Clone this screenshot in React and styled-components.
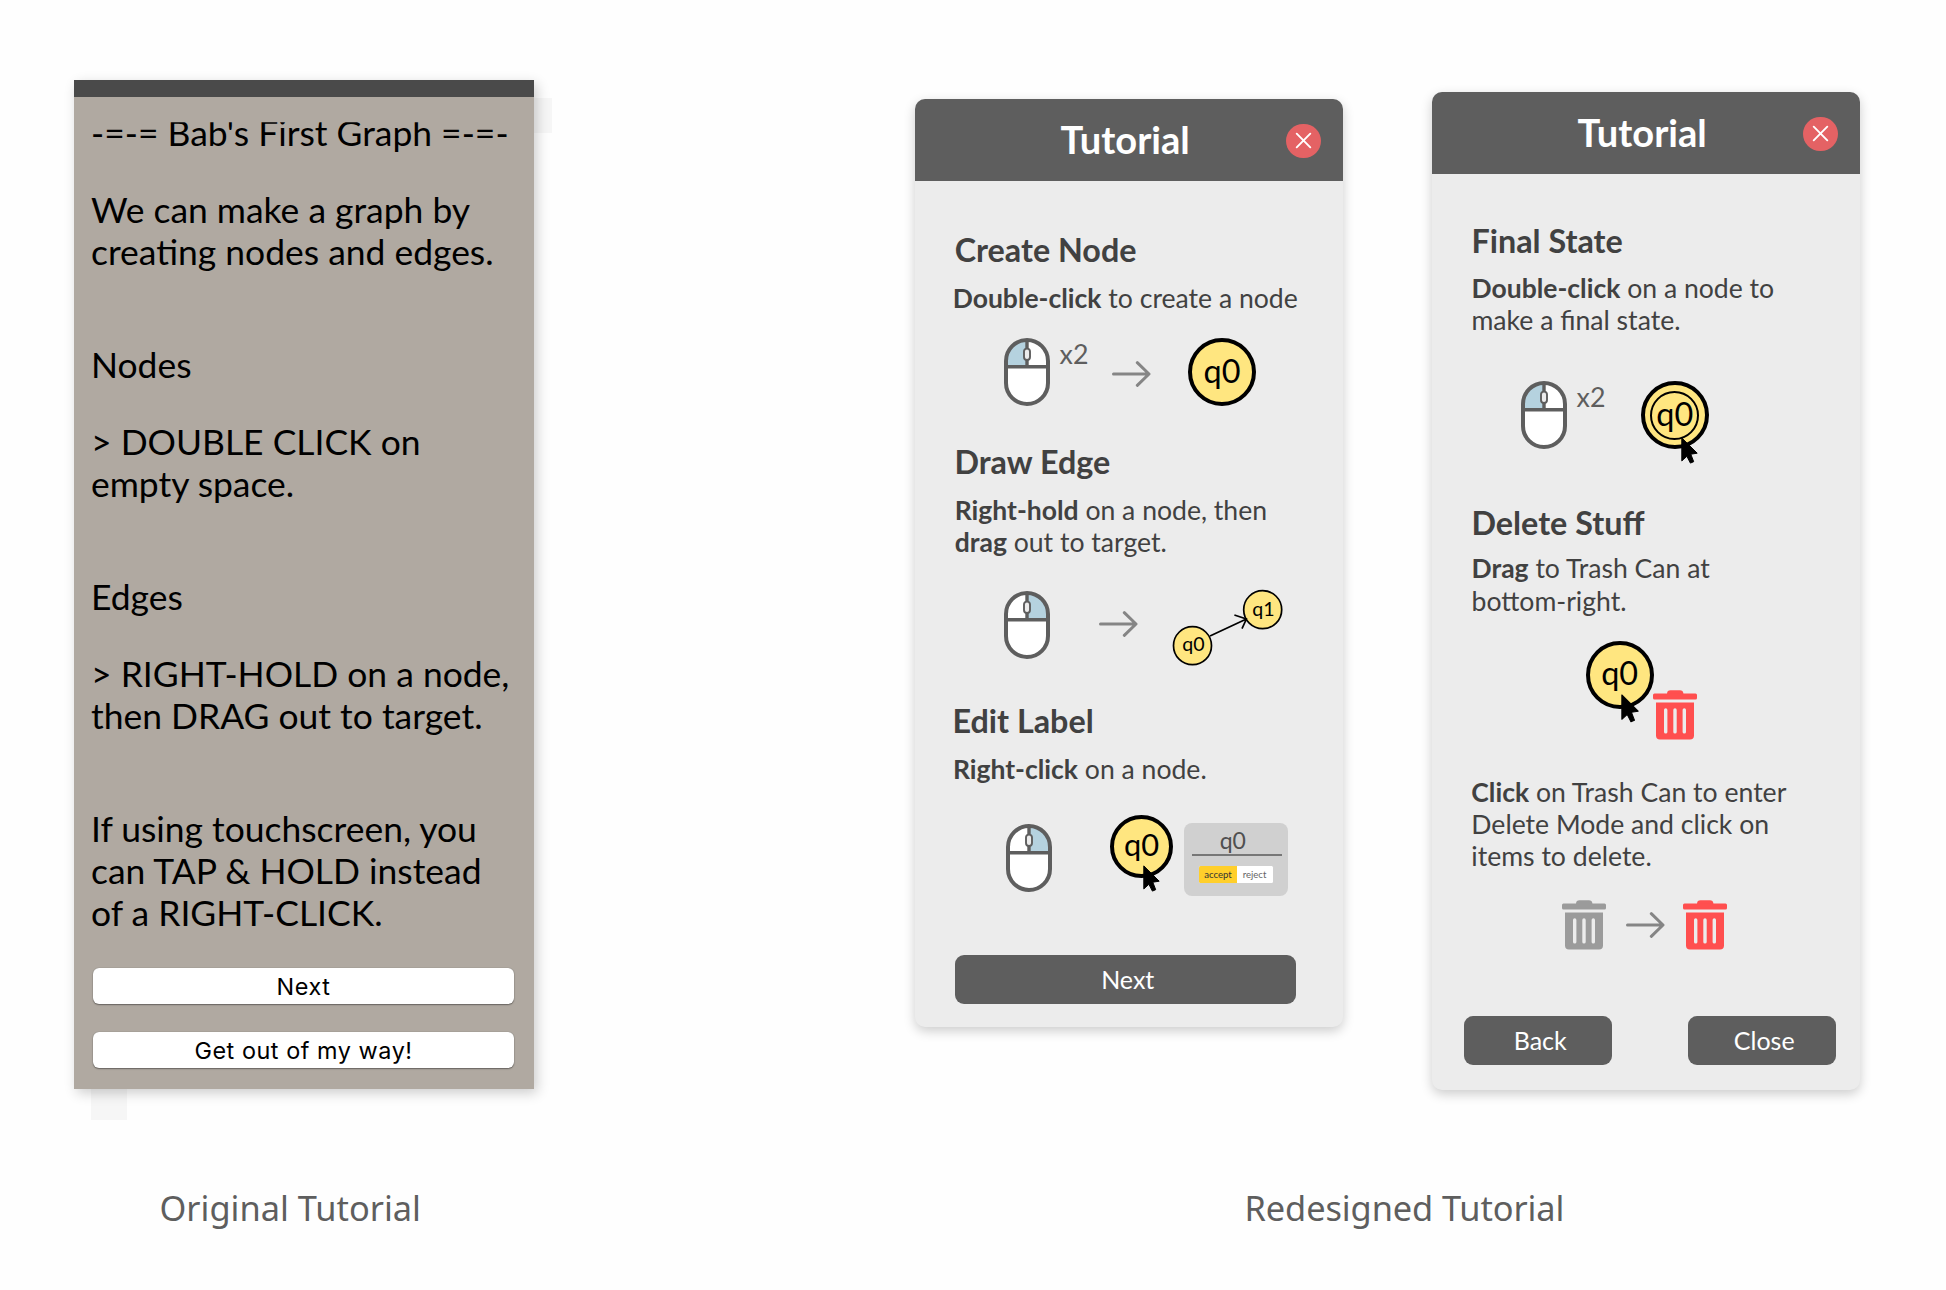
import React from "react";
import styled, { createGlobalStyle } from "styled-components";

const GlobalStyle = createGlobalStyle`
  *, *::before, *::after { box-sizing: border-box; }
  body { margin: 0; background: #fefefe; font-family: Lato, "Open Sans", sans-serif; }
  p, h1, h2, h3 { margin: 0; font-weight: 400; }
  button { border: 0; padding: 0; margin: 0; font-family: inherit; cursor: pointer; }
  svg { display: block; flex: none; }
`;

const Page = styled.main`
  width: 1946px;
  height: 1290px;
  display: flex;
  flex-direction: column;
  overflow: hidden;
  background: #fefefe;
`;

const Stage = styled.div`
  height: 1184px;
  display: flex;
  align-items: flex-start;
  padding-left: 74px;
`;

const Captions = styled.div`
  display: flex;
  padding-left: 159.5px;
`;

const Caption = styled.p`
  width: ${(p) => p.$width || "auto"};
  font: 400 34.4px/48px "Noto Sans", sans-serif;
  letter-spacing: ${(p) => p.$spacing || "0"};
  color: #5e5e5e;
  white-space: nowrap;
`;

/* ---------- original panel ---------- */

const OldPanel = styled.section`
  position: relative;
  width: 460px;
  height: 1009px;
  margin-top: 80px;
  display: flex;
  flex-direction: column;
  background: #b0a9a1;
  box-shadow: 3px 4px 12px rgba(0, 0, 0, 0.2);
`;

const OldBar = styled.div`
  flex: none;
  height: 17px;
  background: #4a4a4a;
`;

const GhostSide = styled.div`
  position: absolute;
  left: 460px;
  top: 18px;
  width: 18px;
  height: 35px;
  background: rgba(0, 0, 0, 0.03);
`;

const GhostBottom = styled.div`
  position: absolute;
  left: 17px;
  top: 1009px;
  width: 36px;
  height: 31px;
  background: rgba(0, 0, 0, 0.03);
`;

const OldBody = styled.div`
  flex: 1;
  display: flex;
  flex-direction: column;
  padding: 15.2px 20px 20px 17px;
`;

const OldText = styled.p`
  font-size: 35.45px;
  line-height: 42px;
  color: #000;
  white-space: pre-line;
  margin-bottom: ${(p) => (p.$wide ? "70.5px" : "35.3px")};
  clip-path: ${(p) => (p.$clipped ? "inset(10px 0 0 0)" : "none")};
  &:last-of-type { margin-bottom: 0; }
`;

const OldActions = styled.div`
  margin: auto 0 1px 2px;
  display: flex;
  flex-direction: column;
  gap: 28px;
`;

const OldButton = styled.button`
  height: 36px;
  padding-top: 2px;
  border-radius: 6px;
  background: #fff;
  box-shadow: 0 0 1px rgba(0, 0, 0, 0.35), 0 1px 1.5px rgba(0, 0, 0, 0.4);
  font: 400 23.4px/34px Inter, sans-serif;
  letter-spacing: 0.55px;
  color: #000;
`;

/* ---------- redesigned panels ---------- */

const Panel = styled.section`
  width: 428px;
  height: ${(p) => p.$height};
  margin: ${(p) => p.$margin};
  display: flex;
  flex-direction: column;
  border-radius: 10px;
  background: #ececec;
  box-shadow: 0 4px 12px rgba(0, 0, 0, 0.2);
`;

const Header = styled.header`
  height: 81.5px;
  flex: none;
  display: flex;
  align-items: center;
  justify-content: space-between;
  padding: 2px 22.5px 0 145.5px;
  border-radius: 10px 10px 0 0;
  background: #5e5e5e;
`;

const Title = styled.h1`
  margin-bottom: 4px;
  font-size: 38.1px;
  line-height: 46px;
  font-weight: 700;
  color: #fff;
`;

const CloseButton = styled.button`
  width: 34.5px;
  height: 34.5px;
  border-radius: 50%;
  display: grid;
  place-items: center;
  background: #e46264;
`;

const Body = styled.div`
  flex: 1;
  display: flex;
  flex-direction: column;
  padding: ${(p) => p.$padding};
`;

const Section = styled.section`
  height: ${(p) => p.$height};
  flex: none;
  display: flex;
  flex-direction: column;
`;

const Heading = styled.h2`
  font-size: 32.3px;
  line-height: 38px;
  font-weight: 700;
  color: #414141;
  margin-left: ${(p) => p.$left || "0"};
`;

const Copy = styled.p`
  font-size: 26.6px;
  line-height: ${(p) => p.$leading || "32px"};
  color: #414141;
  white-space: pre;
  margin-top: ${(p) => p.$top ?? "13px"};
  margin-left: ${(p) => p.$left || "0"};
  b { font-size: 26.5px; font-weight: 700; }
`;

const Figure = styled.div`
  display: flex;
  align-items: flex-start;
  padding-left: ${(p) => p.$left};
  margin-top: ${(p) => p.$top};
`;

const Part = styled.div`
  flex: none;
  position: relative;
  margin: ${(p) => p.$margin || "0"};
`;

const Times = styled.span`
  flex: none;
  width: 30px;
  margin: 0 0 0 9.6px;
  font-size: 26.8px;
  line-height: 32px;
  color: #5e5e5e;
`;

const NodeCircle = styled.div`
  width: ${(p) => p.$size}px;
  height: ${(p) => p.$size}px;
  padding-bottom: 2.5px;
  display: grid;
  place-items: center;
  border: 4px solid #000;
  border-radius: 50%;
  background: #ffe680;
  font-size: ${(p) => (p.$size > 65 ? 32.4 : 30.8)}px;
  line-height: 38px;
  color: #000;
`;

const InnerRing = styled.span`
  position: absolute;
  inset: 9.4px;
  border: 2px solid #000;
  border-radius: 50%;
`;

const CursorSpot = styled.div`
  position: absolute;
  left: ${(p) => p.$x}px;
  top: ${(p) => p.$y}px;
`;

const LabelCard = styled.div`
  width: 104px;
  height: 73.5px;
  padding: 4.5px 6.5px 0 8px;
  display: flex;
  flex-direction: column;
  border-radius: 8px;
  background: #d0d0d0;
`;

const LabelValue = styled.div`
  height: 29px;
  border-bottom: 2px solid #777;
  padding-right: 8px;
  text-align: center;
  font-size: 23px;
  line-height: 26px;
  color: #505050;
`;

const Toggle = styled.div`
  width: 74px;
  height: 17.5px;
  margin: 9.5px 0 0 7px;
  display: flex;
  border-radius: 1.5px;
  overflow: hidden;
  background: #fff;
`;

const ToggleItem = styled.span`
  width: ${(p) => (p.$active ? "38px" : "35px")};
  background: ${(p) => (p.$active ? "#ffcf2b" : "#fff")};
  color: ${(p) => (p.$active ? "#333" : "#666")};
  font-size: 9.6px;
  line-height: 17px;
  text-align: center;
`;

const Actions = styled.div`
  display: flex;
  justify-content: space-between;
  margin-top: auto;
  padding-left: ${(p) => p.$left || "0"};
`;

const Button = styled.button`
  width: ${(p) => p.$width};
  height: 49.5px;
  padding-left: 4.5px;
  border-radius: 9px;
  background: #5e5e5e;
  font-size: 25px;
  line-height: 48px;
  color: #fff;
`;

/* ---------- drawings ---------- */

const Mouse = ({ side }) => (
  <svg width="46" height="68" viewBox="0 0 46 68" fill="none" stroke="#5e5e5e">
    <rect x="2" y="2" width="42" height="64" rx="21" fill="#fff" stroke="none" />
    {side === "left" ? (
      <path d="M2 28V23A21 21 0 0 1 23 2V28Z" fill="#b5d2df" stroke="none" />
    ) : (
      <path d="M44 28V23A21 21 0 0 0 23 2V28Z" fill="#b5d2df" stroke="none" />
    )}
    <rect x="2" y="2" width="42" height="64" rx="21" strokeWidth="4" />
    <path d="M3 28.7H43" strokeWidth="3.4" />
    <path d="M23 3V28" strokeWidth="3.4" />
    <rect x="20" y="10.6" width="6" height="11.4" rx="3" fill="#ececec" strokeWidth="1.9" />
  </svg>
);

const Arrow = () => (
  <svg width="39" height="26" viewBox="0 0 39 26" fill="none" stroke="#858585" strokeWidth="3" strokeLinecap="round" strokeLinejoin="round">
    <path d="M1.5 13H36.5M25.3 1.7L37 13L25.3 24.3" />
  </svg>
);

const Cross = () => (
  <svg width="17" height="17" viewBox="0 0 17 17" stroke="#fff" strokeWidth="1.9" strokeLinecap="round">
    <path d="M1.7 1.7L15.3 15.3M15.3 1.7L1.7 15.3" />
  </svg>
);

const Cursor = ({ scale = 1 }) => (
  <svg width={18 * scale} height={28 * scale} viewBox="0 0 18 28" fill="#000" stroke="#000" strokeWidth="1" strokeLinejoin="round">
    <path d="M0.8 0.9V23.9L5.9 19.3L9.4 26.1L12.7 24.7L9.8 17.2L16.2 16.2Z" />
  </svg>
);

const Trash = ({ color }) => (
  <svg width="44" height="50" viewBox="0 0 44 50" fill={color}>
    <path d="M14 4.5V3.5Q14.3 0.3 17.5 0.3H27Q30 0.3 30.4 3.5V4.5Z" />
    <rect x="0" y="3.4" width="44" height="6" rx="1.5" />
    <path
      fillRule="evenodd"
      d="M3 12.4H41V45.5Q41 49.6 37 49.6H7Q3 49.6 3 45.5ZM11 20V42Q11 43.6 12.7 43.6T14.4 42V20Q14.4 18.3 12.7 18.3T11 20ZM20.3 20V42Q20.3 43.6 22 43.6T23.7 42V20Q23.7 18.3 22 18.3T20.3 20ZM29.6 20V42Q29.6 43.6 31.3 43.6T33 42V20Q33 18.3 31.3 18.3T29.6 20Z"
    />
  </svg>
);

const EdgeDiagram = () => (
  <svg width="112" height="78" viewBox="0 0 112 78" fill="none" stroke="#000" strokeWidth="1.7">
    <circle cx="20.5" cy="56.7" r="19" fill="#ffe680" />
    <circle cx="90.7" cy="20.7" r="19" fill="#ffe680" />
    <path d="M38 47L74.4 30M62.4 26L74.4 30L70 39.7" />
    <g fill="#000" stroke="none" fontFamily="Lato, sans-serif" fontSize="19.6" textAnchor="middle">
      <text x="21.4" y="62.4">q0</text>
      <text x="91.4" y="26.6">q1</text>
    </g>
  </svg>
);

const PanelHeader = () => (
  <Header>
    <Title>Tutorial</Title>
    <CloseButton aria-label="Close">
      <Cross />
    </CloseButton>
  </Header>
);

export default function App() {
  return (
    <Page>
      <GlobalStyle />
      <Stage>
        <OldPanel>
          <OldBar />
          <OldBody>
            <OldText $clipped>-=-= Bab's First Graph =-=-</OldText>
            <OldText $wide>{"We can make a graph by\ncreating nodes and edges."}</OldText>
            <OldText>Nodes</OldText>
            <OldText $wide>{"> DOUBLE CLICK on\nempty space."}</OldText>
            <OldText>Edges</OldText>
            <OldText $wide>{"> RIGHT-HOLD on a node,\nthen DRAG out to target."}</OldText>
            <OldText>{"If using touchscreen, you\ncan TAP & HOLD instead\nof a RIGHT-CLICK."}</OldText>
            <OldActions>
              <OldButton>Next</OldButton>
              <OldButton>Get out of my way!</OldButton>
            </OldActions>
          </OldBody>
          <GhostSide />
          <GhostBottom />
        </OldPanel>

        <Panel $height="928px" $margin="99px 0 0 381px">
          <PanelHeader />
          <Body $padding="50px 47px 23px 37px">
            <Section $height="212.3px">
              <Heading $left="2.7px">Create Node</Heading>
              <Copy $left="0.7px"><b>Double-click</b> to create a node</Copy>
              <Figure $left="52px" $top="24.3px">
                <Mouse side="left" />
                <Times>x2</Times>
                <Part $margin="23.7px 0 0 22.7px"><Arrow /></Part>
                <Part $margin="0 0 0 36.7px">
                  <NodeCircle $size={68}>q0</NodeCircle>
                </Part>
              </Figure>
            </Section>
            <Section $height="259.4px">
              <Heading $left="2.5px">Draw Edge</Heading>
              <Copy $left="2.7px">
                <b>Right-hold</b> on a node, then<br />
                <b>drag</b> out to target.
              </Copy>
              <Figure $left="52px" $top="33.5px">
                <Mouse side="right" />
                <Part $margin="20.2px 0 0 49px"><Arrow /></Part>
                <Part $margin="-2.7px 0 0 34px"><EdgeDiagram /></Part>
              </Figure>
            </Section>
            <Section $height="220px">
              <Heading $left="0.5px">Edit Label</Heading>
              <Copy $left="0.9px"><b>Right-click</b> on a node.</Copy>
              <Figure $left="54px" $top="29.8px">
                <Part $margin="9.3px 0 0 0"><Mouse side="right" /></Part>
                <Part $margin="0 0 0 58px">
                  <NodeCircle $size={63}>q0</NodeCircle>
                  <CursorSpot $x={33} $y={50}><Cursor /></CursorSpot>
                </Part>
                <Part $margin="7.7px 0 0 11px">
                  <LabelCard>
                    <LabelValue>q0</LabelValue>
                    <Toggle>
                      <ToggleItem $active>accept</ToggleItem>
                      <ToggleItem>reject</ToggleItem>
                    </Toggle>
                  </LabelCard>
                </Part>
              </Figure>
            </Section>
            <Actions $left="3px">
              <Button $width="341px">Next</Button>
            </Actions>
          </Body>
        </Panel>

        <Panel $height="998px" $margin="92px 0 0 89px">
          <PanelHeader />
          <Body $padding="48px 24px 25px 32px">
            <Section $height="282px">
              <Part $margin="0 0 0 7.5px">
                <Heading>Final State</Heading>
                <Copy $top="12.7px">
                  <b>Double-click</b> on a node to<br />
                  make a final state.
                </Copy>
              </Part>
              <Figure $left="57px" $top="45px">
                <Mouse side="left" />
                <Times>x2</Times>
                <Part $margin="0 0 0 34.2px">
                  <NodeCircle $size={68}>q0</NodeCircle>
                  <InnerRing />
                  <CursorSpot $x={40} $y={56.2}><Cursor /></CursorSpot>
                </Part>
              </Figure>
            </Section>
            <Section $height="272.2px">
              <Part $margin="0 0 0 7.5px">
                <Heading>Delete Stuff</Heading>
                <Copy $top="10.5px" $leading="32.5px">
                  <b>Drag</b> to Trash Can at<br />
                  bottom-right.
                </Copy>
              </Part>
              <Figure $left="121.7px" $top="23.6px">
                <Part>
                  <NodeCircle $size={68}>q0</NodeCircle>
                  <CursorSpot $x={35.3} $y={53}><Cursor scale={1.06} /></CursorSpot>
                </Part>
                <Part $margin="49.6px 0 0 -0.7px"><Trash color="#ff4f4f" /></Part>
              </Figure>
            </Section>
            <Section $height="180px">
              <Copy $top="0" $left="7.3px">
                <b>Click</b> on Trash Can to enter<br />
                Delete Mode and click on<br />
                items to delete.
              </Copy>
              <Figure $left="98.3px" $top="28px">
                <Trash color="#9b9b9b" />
                <Part $margin="12.8px 0 0 19.4px"><Arrow /></Part>
                <Part $margin="0 0 0 18.6px"><Trash color="#ff4f4f" /></Part>
              </Figure>
            </Section>
            <Actions>
              <Button $width="148px">Back</Button>
              <Button $width="148px">Close</Button>
            </Actions>
          </Body>
        </Panel>
      </Stage>
      <Captions>
        <Caption $width="1085px">Original Tutorial</Caption>
        <Caption $spacing="-0.1px">Redesigned Tutorial</Caption>
      </Captions>
    </Page>
  );
}
